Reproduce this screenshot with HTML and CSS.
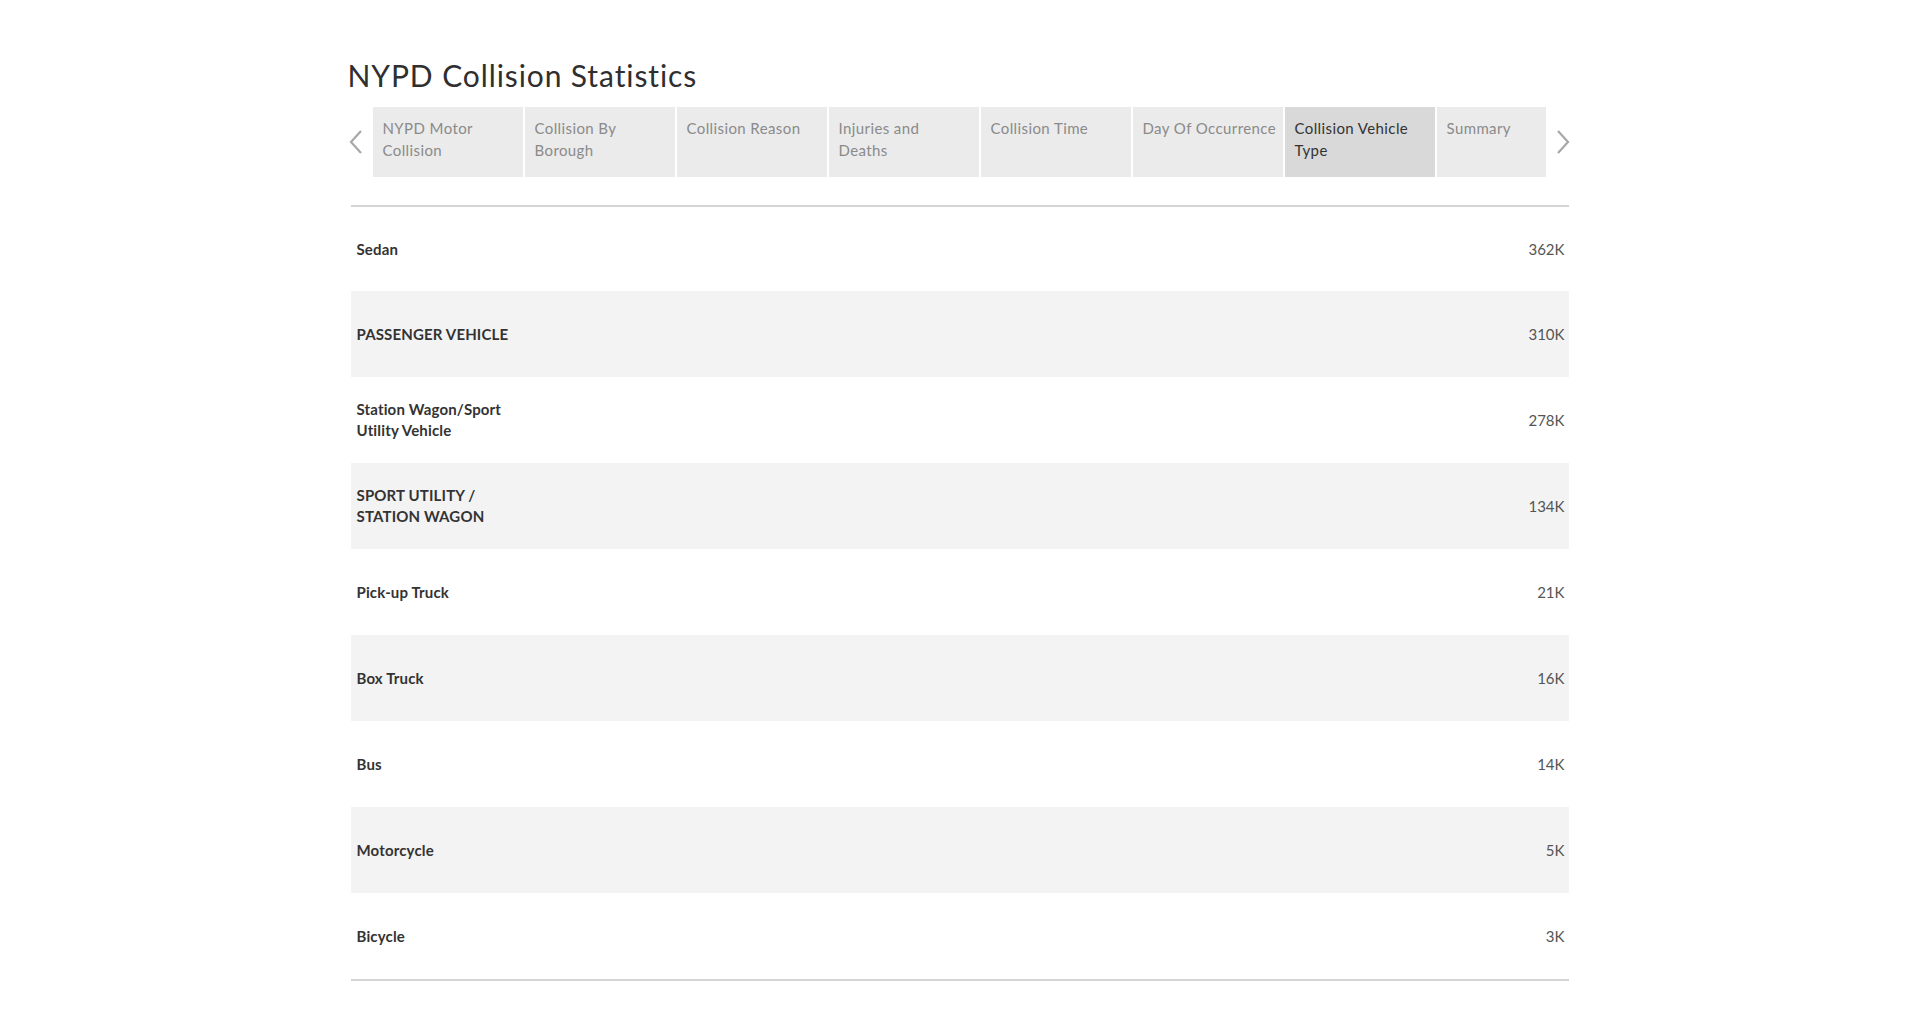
FILE: index.html
```html
<!DOCTYPE html>
<html lang="en">
<head>
<meta charset="utf-8">
<title>NYPD Collision Statistics</title>
<link rel="stylesheet" href="styles.css">
</head>
<body>
<div class="page">
  <h1 class="title">NYPD Collision Statistics</h1>
  <div class="tabbar">
    <div class="arrow arrow-left">
      <svg width="16" height="24" viewBox="0 0 16 24"><polyline points="13,1 3,12 13,23" fill="none" stroke="#a8a8a8" stroke-width="2.2"/></svg>
    </div>
    <div class="tabs">
      <div class="tab">NYPD Motor<br>Collision</div>
      <div class="tab">Collision By<br>Borough</div>
      <div class="tab">Collision Reason</div>
      <div class="tab">Injuries and<br>Deaths</div>
      <div class="tab">Collision Time</div>
      <div class="tab">Day Of Occurrence</div>
      <div class="tab active">Collision Vehicle<br>Type</div>
      <div class="tab short">Summary</div>
    </div>
    <div class="arrow arrow-right">
      <svg width="16" height="24" viewBox="0 0 16 24"><polyline points="3,1 13,12 3,23" fill="none" stroke="#a8a8a8" stroke-width="2.2"/></svg>
    </div>
  </div>
  <div class="table">
    <div class="row"><div class="label">Sedan</div><div class="value">362K</div></div>
    <div class="row alt"><div class="label">PASSENGER VEHICLE</div><div class="value">310K</div></div>
    <div class="row"><div class="label">Station Wagon/Sport<br>Utility Vehicle</div><div class="value">278K</div></div>
    <div class="row alt"><div class="label">SPORT UTILITY /<br>STATION WAGON</div><div class="value">134K</div></div>
    <div class="row"><div class="label">Pick-up Truck</div><div class="value">21K</div></div>
    <div class="row alt"><div class="label">Box Truck</div><div class="value">16K</div></div>
    <div class="row"><div class="label">Bus</div><div class="value">14K</div></div>
    <div class="row alt"><div class="label">Motorcycle</div><div class="value">5K</div></div>
    <div class="row"><div class="label">Bicycle</div><div class="value">3K</div></div>
  </div>
</div>
</body>
</html>
```

FILE: styles.css
```css
html, body {
  margin: 0;
  padding: 0;
  background: #ffffff;
}
body {
  font-family: "Lato", "Open Sans", "Liberation Sans", sans-serif;
  color: #333333;
}
.page {
  width: 1224px;
  margin: 0 auto;
  padding-top: 57px;
  padding-left: 1px;
}
.title {
  margin: 0;
  font-size: 30px;
  font-weight: 400;
  line-height: 36px;
  height: 50px;
  color: #2f2f2f;
  letter-spacing: 0.9px;
}
.tabbar {
  display: flex;
  align-items: center;
  height: 70px;
}
.arrow {
  display: flex;
  align-items: center;
  height: 70px;
}
.arrow-left {
  width: 25px;
}
.arrow-right {
  margin-left: 9px;
  width: 16px;
}
.tabs {
  display: flex;
  gap: 2px;
  height: 70px;
}
.tab {
  width: 150px;
  box-sizing: border-box;
  height: 70px;
  background: #ebebeb;
  color: #8a8a8a;
  font-size: 15px;
  line-height: 22px;
  letter-spacing: 0.4px;
  white-space: nowrap;
  padding: 10px 4px 0 10px;
}
.tab.active {
  background: #d9d9d9;
  color: #333333;
}
.tab.short {
  width: 109px;
}
.table {
  margin: 28px 3px 0 3px;
  border-top: 2px solid #d4d4d4;
  border-bottom: 2px solid #d4d4d4;
}
.row {
  display: flex;
  align-items: center;
  justify-content: space-between;
  height: 86px;
  padding: 0 4px 0 6px;
}
.row:first-child {
  height: 84px;
}
.row.alt {
  background: #f3f3f3;
}
.label {
  font-size: 15px;
  font-weight: 700;
  line-height: 21px;
  letter-spacing: 0.15px;
  color: #333333;
}
.value {
  font-size: 15px;
  color: #555555;
}
```
